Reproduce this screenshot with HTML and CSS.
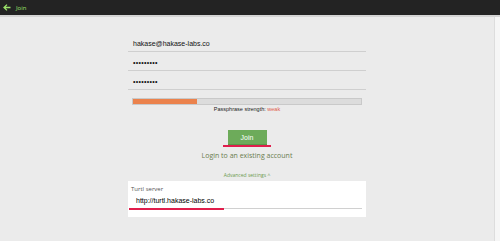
FILE: index.html
```html
<!DOCTYPE html>
<html lang="en">
<head>
    <meta charset="UTF-8">
    <title>Join</title>
    <link rel="stylesheet" href="styles.css">
</head>
<body>
    <div class="header">
        <svg class="back" width="8" height="7" viewBox="0 0 8 7">
            <path d="M4 0.6 L1 3.5 L4 6.4 M1 3.5 H7.5" fill="none" stroke="#9be26a" stroke-width="1.3"/>
        </svg>
        <span class="title">Join</span>
    </div>

    <div class="page">
        <div class="main">
            <div class="form">
                <div class="field">hakase@hakase-labs.co</div>
                <div class="field pass">•••••••••</div>
                <div class="field pass">•••••••••</div>

                <div class="strength">
                    <div class="fill" style="width: 28%"></div>
                </div>
                <div class="strength-text">Passphrase strength: <span class="weak">weak</span></div>

                <div class="actions">
                    <div class="btn-wrap">
                        <button class="join">Join</button>
                        <span class="mark mark-btn"></span>
                    </div>
                    <div class="login">Login to an existing account</div>
                    <div class="advanced">Advanced settings <span class="caret">^</span></div>
                </div>

                <div class="server">
                    <div class="server-label">Turtl server</div>
                    <div class="server-field">http://turtl.hakase-labs.co</div>
                    <span class="mark mark-url"></span>
                </div>
            </div>
        </div>
        <div class="scroll"></div>
    </div>
</body>
</html>
```

FILE: styles.css
```css
body {
    margin: 0;
    padding: 0;
    background: #ebebeb;
    font-family: "Liberation Sans", Arial, sans-serif;
    color: #222;
    height: 241px;
    overflow: hidden;
}

.header {
    height: 15px;
    background: #232323;
    border-bottom: 2px solid #d4d4d4;
    display: flex;
    align-items: center;
    padding-left: 3px;
    gap: 5px;
}

.back {
    display: block;
}

.title {
    color: #9be26a;
    font-size: 6px;
    font-family: "Open Sans", sans-serif;
}

.page {
    display: flex;
    height: 224px;
}

.main {
    flex: 1;
}

.scroll {
    width: 5px;
    background: #f6f6f6;
    border-left: 1px solid #dddddd;
}

.form {
    width: 238px;
    margin: 20px auto 0;
}

.field {
    height: 14px;
    line-height: 14px;
    border-bottom: 1px solid #cfcfcf;
    margin-bottom: 4px;
    padding-left: 5px;
    font-size: 7px;
    color: #111;
}

.field.pass {
    font-size: 7px;
    letter-spacing: 0.3px;
}

.strength {
    margin: 8px 4px 0;
    height: 5px;
    border: 1px solid #c9c9c9;
    background: #dcdcdc;
}

.fill {
    height: 100%;
    background: #eb824c;
}

.strength-text {
    text-align: center;
    font-size: 5.5px;
    line-height: 7px;
    margin-top: 1px;
    color: #222;
}

.weak {
    color: #e0604e;
}

.actions {
    text-align: center;
}

.btn-wrap {
    position: relative;
    display: inline-block;
    margin-top: 17px;
}

.join {
    display: block;
    width: 39px;
    height: 15px;
    background: #6dab5a;
    border: none;
    border-bottom: 1px solid #5b9449;
    color: #fff;
    font-family: "Liberation Sans", Arial, sans-serif;
    font-size: 7px;
    padding: 0;
}

.mark {
    position: absolute;
    height: 2px;
    background: #e01e4c;
}

.mark-btn {
    left: -5px;
    right: -4px;
    bottom: -2px;
}

.login {
    font-family: "Open Sans", sans-serif;
    font-size: 7px;
    color: #6a7d4f;
    margin-top: 6px;
    line-height: 10px;
}

.advanced {
    font-family: "Open Sans", sans-serif;
    font-size: 5px;
    color: #6a9a4e;
    margin-top: 11px;
    line-height: 6px;
}

.caret {
    font-size: 5px;
}

.server {
    position: relative;
    background: #ffffff;
    margin-top: 3px;
    height: 36px;
    padding: 4px 4px 0 3px;
    box-sizing: border-box;
}

.server-label {
    font-family: "Open Sans", sans-serif;
    font-size: 6px;
    color: #555;
    line-height: 8px;
}

.server-field {
    margin-top: 1px;
    height: 14px;
    line-height: 13px;
    padding-left: 5px;
    border-bottom: 1px solid #d0d0d0;
    font-size: 7px;
    color: #000;
}

.mark-url {
    left: 1px;
    width: 95px;
    top: 27px;
}
```
